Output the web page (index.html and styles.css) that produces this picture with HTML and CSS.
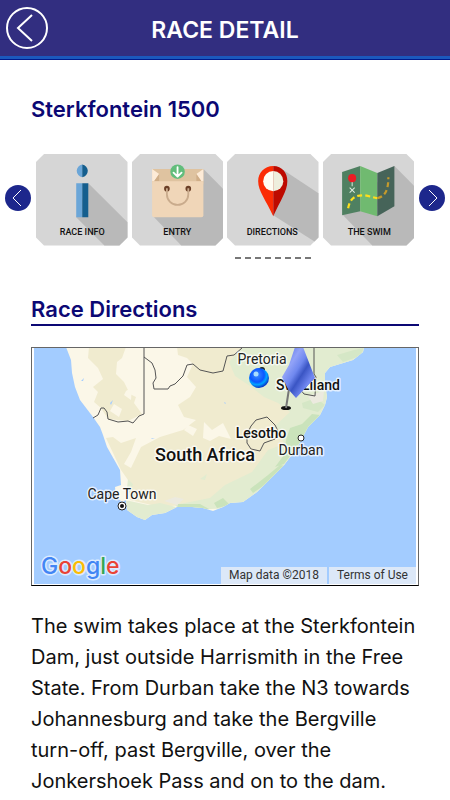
FILE: index.html
```html
<!DOCTYPE html>
<html lang="en">
<head>
    <meta charset="UTF-8">
    <meta name="viewport" content="width=device-width, initial-scale=1.0">
    <title>Race Detail</title>
    <link rel="stylesheet" href="styles.css">
</head>
<body>

    <!-- Top bar -->
    <header class="topbar">
        <button class="back" type="button" aria-label="Back">
            <svg viewBox="0 0 42 42">
                <circle cx="21" cy="21" r="20"/>
                <path d="M26 8 L12 21 L26 34"/>
            </svg>
        </button>
        <h1>RACE DETAIL</h1>
    </header>

    <main>
        <h2 class="race-name">Sterkfontein 1500</h2>

        <!-- Section menu -->
        <nav class="carousel">
            <button class="arrow" type="button" aria-label="Previous">
                <svg viewBox="0 0 26 26"><path d="M16 5 L8 13 L16 21"/></svg>
            </button>
            <ul class="tiles">
                <li>
                    <a href="#info">
                        <svg viewBox="0 0 91 91">
                            <path class="tile" d="M8 0H83L91 8V83L83 91H8L0 83V8Z"/>
                            <path class="shade" d="M52 29L91 68V83L83 91H68L40 63Z"/>
                            <path fill="#6ba6d8" d="M46 10.500A6.300 6.300 0 0 0 46 23ZM40 29H46V63H40Z"/>
                            <path fill="#145e8e" d="M46 10.500A6.300 6.300 0 0 1 46 23ZM46 29H52V63H46Z"/>
                            <text x="46" y="81">RACE INFO</text>
                        </svg>
                    </a>
                </li>
                <li>
                    <a href="#entry">
                        <svg viewBox="0 0 91 91">
                            <path class="tile" d="M8 0H83L91 8V83L83 91H8L0 83V8Z"/>
                            <path class="shade" d="M71 15L91 35V83L83 91H49L21 62Z"/>
                            <path fill="#dfc3a0" d="M20 15H71V30H20Z"/>
                            <path fill="#fdebd7" d="M20 15L27 20L22 27H20ZM71 15L64 20L69 27H71Z"/>
                            <path fill="#d0ae88" d="M27 20L22 27H27ZM64 20L69 27H64Z"/>
                            <path fill="#f0d6b8" d="M20 27H71V61Q71 63 69 63H22Q20 63 20 61Z"/>
                            <circle cx="34.700" cy="34.500" r="2.800" fill="#6b3f27"/>
                            <circle cx="56" cy="34.500" r="2.800" fill="#6b3f27"/>
                            <path fill="none" stroke="#c9ab8c" stroke-width="1.800" d="M34.700 34V40A10.600 10.600 0 0 0 56 40V34"/>
                            <circle cx="45.300" cy="17.600" r="7.200" fill="#62bd7c"/>
                            <path fill="none" stroke="#fff" stroke-width="1.800" stroke-linecap="round" stroke-linejoin="round" d="M45.300 13V22M41.300 18.500L45.300 22.500L49.300 18.500"/>
                            <text x="45" y="81">ENTRY</text>
                        </svg>
                    </a>
                </li>
                <li class="active">
                    <a href="#directions" aria-current="true">
                        <svg viewBox="0 0 91 91">
                            <path class="tile" d="M8 0H83L91 8V83L83 91H8L0 83V8Z"/>
                            <path class="shade" d="M56 16L91 39V83L87 87L46 61Z"/>
                            <path fill="#fb2c05" d="M46 12C37 12 31 19 31 27C31 37 39 46 46 62Z"/>
                            <path fill="#bd0a00" d="M46 12C55 12 60 19 60 27C60 37 53 46 46 62Z"/>
                            <path fill="#fffdf3" d="M46 17A10 10 0 0 0 46 37Z"/>
                            <path fill="#eeeedd" d="M46 17A10 10 0 0 1 46 37Z"/>
                            <text x="45" y="81">DIRECTIONS</text>
                        </svg>
                    </a>
                </li>
                <li>
                    <a href="#swim">
                        <svg viewBox="0 0 91 91">
                            <path class="tile" d="M8 0H83L91 8V83L83 91H8L0 83V8Z"/>
                            <path class="shade" d="M71 12L91 32V83L83 91H49L20 61Z"/>
                            <path fill="#4f8061" d="M19 18L37 12V57L19 61Z"/>
                            <path fill="#70ba70" d="M37 12L54 19V62L37 57Z"/>
                            <path fill="#466459" d="M54 19L71 12V52L54 62Z"/>
                            <path fill="none" stroke="#ffdf1b" stroke-width="2.200" stroke-dasharray="5 3" d="M25 54C27 43 33 41 41 41C46 42 50 43 54 44"/>
                            <path fill="none" stroke="#c49a2c" stroke-width="2.200" stroke-dasharray="5 3" d="M54 44C62 42 65 36 65 23"/>
                            <path stroke="#dce9df" d="M29 27V32M26.500 33.500L31.500 38.500M31.500 33.500L26.500 38.500"/>
                            <circle cx="29" cy="24" r="4" fill="#ec1c24"/>
                            <text x="46" y="81">THE SWIM</text>
                        </svg>
                    </a>
                </li>
            </ul>
            <button class="arrow" type="button" aria-label="Next">
                <svg viewBox="0 0 26 26"><path d="M10 5 L18 13 L10 21"/></svg>
            </button>
        </nav>

        <section class="content" id="directions">
            <h2>Race Directions</h2>

            <!-- Map -->
            <div class="map">
                <svg class="map-art" viewBox="34 348 382 236">
                    <defs>
                        <clipPath id="land">
                            <path d="M66 347L71 360L72 373L75 387L80 400L93 417L100 427L103 435L107 447L120 470L121 485L115 487L116 497L122 502L126 500L127 510L137 517L145 520L152 515L165 513L177 507L192 507L203 508L213 511L223 507L230 503L243 502L257 492L271 478L284 465L297 448L308 427L320 415L325 405L327 397L325 384L325 373L330 367L353 360L363 352L364 347Z"/>
                        </clipPath>
                        <linearGradient id="flag" x1="0" y1="0" x2="1" y2="1">
                            <stop offset="0" stop-color="#4967e0"/>
                            <stop offset="0.300" stop-color="#92a3f8"/>
                            <stop offset="0.450" stop-color="#6f88ef"/>
                            <stop offset="0.570" stop-color="#3a55c4"/>
                            <stop offset="0.750" stop-color="#7188f2"/>
                            <stop offset="1" stop-color="#4a63d8"/>
                        </linearGradient>
                        <radialGradient id="ball" cx="0.400" cy="0.350" r="0.650">
                            <stop offset="0" stop-color="#3f8cff"/>
                            <stop offset="0.550" stop-color="#0a56ff"/>
                            <stop offset="0.750" stop-color="#00a5ff"/>
                            <stop offset="1" stop-color="#0736c8"/>
                        </radialGradient>
                    </defs>
                    <rect x="34" y="347" width="382" height="240" fill="#a3ccff"/>
                    <g clip-path="url(#land)">
                        <rect x="34" y="347" width="350" height="180" fill="#fbf7e8"/>
                        <!-- dry areas -->
                        <path fill="#f0ebcf" d="M89 347H126L122 358L117 362L116 374L124 382L130 394L136 397L134 403L142 414L128 421L108 419L101 408L94 402L98 392L93 387L103 379L98 368L88 358Z"/>
                        <path fill="#f0ebcf" d="M177 347H300L290 470L240 500L160 507L130 500L128 480L121 470L106 438L113 437L121 443L136 438L131 452L124 464L131 468L141 447L160 437L183 430L196 420L184 417L178 405L190 397L196 387L187 377L193 364L187 358L178 355Z"/>
                        <path fill="#fbf7e8" d="M204 422L212 430L223 423L231 439L219 436L210 441L203 438ZM188 425L197 429L193 436L184 430ZM222 447L228 458L219 454ZM126 391L132 387L131 400L124 395ZM114 404L122 409L119 417L110 411Z"/>
                        <!-- vegetation -->
                        <path fill="#e2ecd0" d="M243 347H370V405L325 418L300 470L240 508L180 510L175 505L210 498L225 485L252 472L268 450L284 444L276 425L290 412L278 403L264 397L250 386L235 376L229 362Z"/>
                        <path fill="#e2ecd0" d="M125 500L148 505L160 503L176 507L170 522H130ZM128 479L133 484L131 494L127 488ZM200 479L207 474L205 480Z"/>
                        <path fill="#cae3bb" d="M178 504L200 504L209 509L196 512L177 509ZM214 503L223 498L230 505L217 508ZM250 489L268 475L280 465L286 466L269 482L253 493ZM286 440L290 428L302 424L312 414L320 415L308 430L296 448L284 464L275 467L284 455Z"/>
                        <path fill="#d5e7c6" d="M337 355L354 350L364 348L360 356L343 362ZM302 403L316 398L325 405L318 412L303 408Z"/>
                        <path fill="#eceadf" d="M164 501L175 497L184 499L177 505ZM308 396L324 391L323 401L313 404Z"/>
                    </g>
                    <path fill="#a3ccff" d="M81 381L84 378L83 381ZM110 403L113 400L111 405ZM224 402L226 403L225 404ZM151 438L155 439L152 439Z"/>
                    <!-- borders -->
                    <g class="border">
                        <path d="M93 418L98 415L101 408L104 408L107 412L108 419L118 422L128 421L133 423L139 416L144 414V347"/>
                        <path d="M144 357L152 363L155 370L156 378L153 383L154 389H168L170 386L175 384L183 376L187 365L193 364L200 370L213 373L223 371L227 356L234 355L242 348"/>
                        <path d="M314 347V374L316 377L315 396L304 394L300 389"/>
                        <path d="M247 434L251 426L256 420L267 417L272 422L275 425L278 431L275 439L264 443L260 451L251 449L247 443Z"/>
                    </g>
                    <!-- place names -->
                    <g class="places">
                        <text x="262" y="364">Pretoria</text>
                        <text x="301" y="455">Durban</text>
                        <text x="122" y="499">Cape Town</text>
                        <text class="country" x="308" y="390">Swaziland</text>
                        <text class="country" x="261" y="438">Lesotho</text>
                        <text class="main-country" x="205" y="461">South Africa</text>
                    </g>
                    <circle cx="301" cy="438" r="3" fill="#fff" stroke="#222"/>
                    <circle cx="122" cy="506" r="4" fill="#fff" stroke="#222"/>
                    <circle cx="122" cy="506" r="2" fill="#111"/>
                    <circle cx="262" cy="370" r="3" fill="#222"/>
                    <circle cx="259" cy="378" r="10" fill="url(#ball)"/>
                    <circle cx="256" cy="374" r="2.500" fill="#a9ddff"/>
                    <!-- race marker -->
                    <ellipse cx="286" cy="408" rx="5" ry="2" fill="#111"/>
                    <path stroke="#777" stroke-width="2" d="M289 389L286 408"/>
                    <path fill="url(#flag)" d="M295 347H303L315 378L296 398L288 389L282 377L289 365Z"/>
                    <text class="logo" x="41" y="574"><tspan fill="#4285f4">G</tspan><tspan fill="#ea4335">o</tspan><tspan fill="#fbbc05">o</tspan><tspan fill="#4285f4">g</tspan><tspan fill="#34a853">l</tspan><tspan fill="#ea4335">e</tspan></text>
                </svg>
                <div class="map-credits">
                    <span>Map data ©2018</span>
                    <a href="#terms">Terms of Use</a>
                </div>
            </div>

            <p>The swim takes place at the Sterkfontein Dam, just outside Harrismith in the Free State. From Durban take the N3 towards Johannesburg and take the Bergville turn-off, past Bergville, over the Jonkershoek Pass and on to the dam.</p>
        </section>
    </main>

</body>
</html>
```
FILE: styles.css
```css
* {
    margin: 0;
    padding: 0;
    box-sizing: border-box;
}

body {
    font-family: Inter, sans-serif;
    background-color: #fff;
    color: #111;
}

svg {
    display: block;
    width: 100%;
}

button {
    border: none;
    background: none;
    cursor: pointer;
}

/* Top bar */
.topbar {
    display: grid;
    grid-template-columns: 42px 1fr 42px;
    align-items: center;
    height: 60px;
    padding: 0 6px;
    background-color: #322e80;
    border-bottom: 1px solid #001a8c;
    box-shadow: inset 0 -3px #1b58bd;
}

.topbar h1 {
    font-size: 23px;
    font-weight: 600;
    line-height: 28px;
    text-align: center;
    color: #fff;
}

.back {
    height: 42px;
    margin-bottom: 4px;
}

.back svg {
    fill: none;
    stroke: #fff;
    stroke-width: 2;
}

h2 {
    font-size: 22px;
    font-weight: 600;
    line-height: 28px;
    color: #0c0874;
}

.race-name {
    padding: 35px 31px 31px;
}

/* Section menu */
.carousel {
    display: flex;
    align-items: center;
    gap: 5px;
    padding: 0 5px;
}

.arrow {
    flex: none;
    width: 26px;
    height: 26px;
    margin-bottom: 16px;
    border-radius: 50%;
    background-color: #1d278c;
}

.arrow svg {
    fill: none;
    stroke: #fff;
}

.tiles {
    flex: 1;
    display: grid;
    grid-template-columns: repeat(4, 1fr);
    gap: 4px;
    list-style: none;
}

.tiles a {
    display: block;
    padding-bottom: 11px;
}

.tiles li::after {
    content: "";
    display: block;
    margin: 0 8px;
    border-bottom: 2px dashed transparent;
}

.tiles .active::after {
    border-color: #777;
}

.tile {
    fill: #d6d6d6;
}

.shade {
    fill: #b9b9b9;
}

.tiles text {
    font-family: Roboto, sans-serif;
    font-size: 9px;
    font-weight: 500;
    text-anchor: middle;
    fill: #111;
}

/* Directions */
.content {
    padding: 36px 31px 0;
}

.content h2 {
    padding-bottom: 1px;
    border-bottom: 2px solid #0c0874;
}

.content p {
    margin-top: 25px;
    font-size: 20px;
    line-height: 31px;
}

/* Map */
.map {
    position: relative;
    margin-top: 21px;
    padding: 0 2px 1px;
    border: 1px solid #666;
    border-bottom-color: #000;
}

.border {
    fill: none;
    stroke: #555;
    stroke-width: 1;
}

.places text {
    font-family: Roboto, sans-serif;
    font-size: 14px;
    text-anchor: middle;
    fill: #222;
    stroke: #fff;
    stroke-width: 3px;
    stroke-opacity: 0.7;
    stroke-linejoin: round;
    paint-order: stroke;
}

.places .country {
    font-weight: 500;
    fill: #111;
}

.places .main-country {
    font-size: 18px;
    font-weight: 500;
    fill: #111;
}

.logo {
    font-family: Inter, sans-serif;
    font-size: 23px;
    font-weight: 500;
    stroke: #dcebff;
    stroke-width: 3px;
    stroke-linejoin: round;
    paint-order: stroke;
}

.map-credits {
    position: absolute;
    right: 2px;
    bottom: 1px;
    display: flex;
    gap: 2px;
    font-family: Roboto, sans-serif;
    font-size: 12px;
    line-height: 17px;
}

.map-credits span,
.map-credits a {
    padding: 0 8px;
    background-color: #dce8f8;
    color: #333;
    text-decoration: none;
}
```
